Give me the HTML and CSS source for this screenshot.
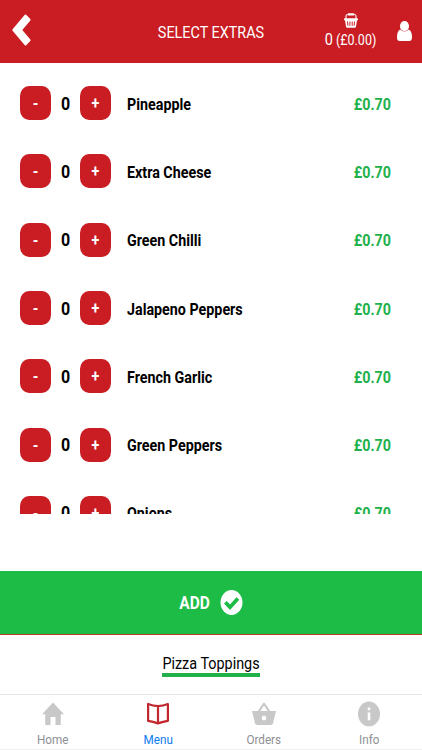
FILE: index.html
```
<!DOCTYPE html>
<html lang="en">
<head>
<meta charset="utf-8">
<title>Select Extras</title>
<link rel="stylesheet" href="styles.css">
</head>
<body>
<header class="header">
  <svg class="back" viewBox="0 0 19 32"><path d="M12.8.8q.7-.8 1.400 0L18.300 5q.6.8 0 1.600L10.300 16l8 9.400q.6.8 0 1.600L14.200 31.200q-.7.8-1.400 0L.6 16.800q-.6-.8 0-1.600z"/></svg>
  <h1 class="title"><span class="tall">SELECT EXTRAS</span></h1>
  <div class="cart">
    <svg class="cart-icon" viewBox="0 0 14 15"><path fill="none" stroke="#fff" stroke-width="1.1" d="M2 6.500V3Q2 1.500 3.800 1.500M12 6.500V3q0-1.500-1.800-1.500"/><rect x="3.600" y=".3" width="6.800" height="2.200" rx=".9"/><rect y="5.200" width="14" height="2.200" rx=".8"/><path d="M1 7h12l-1 6.500q-.2 1.200-1.200 1.200H3.200q-1 0-1.200-1.200z"/><path stroke="#c91d23" stroke-width="1" d="m3.500 8.500.4 4.200M5.900 8.500v4.200m2.300 0V8.500m2.300 0-.4 4.200"/></svg>
    <span class="cart-total tall"><span class="count">0</span> (£0.00)</span>
  </div>
  <svg class="user" viewBox="0 0 15 20"><ellipse cx="7.500" cy="5.200" rx="4.500" ry="5.100"/><path d="M3.200 8.500Q0 10 0 16.500 0 20 2.800 20h9.400q2.800 0 2.800-3.500 0-6.500-3.200-8-4.300 3.800-8.600 0z"/></svg>
</header>
<main class="list">
  <div class="row"><button class="step"><span class="tall">-</span></button><span class="qty tall">0</span><button class="step"><span class="tall">+</span></button><span class="name tall">Pineapple</span><span class="price tall">£0.70</span></div>
  <div class="row"><button class="step"><span class="tall">-</span></button><span class="qty tall">0</span><button class="step"><span class="tall">+</span></button><span class="name tall">Extra Cheese</span><span class="price tall">£0.70</span></div>
  <div class="row"><button class="step"><span class="tall">-</span></button><span class="qty tall">0</span><button class="step"><span class="tall">+</span></button><span class="name tall">Green Chilli</span><span class="price tall">£0.70</span></div>
  <div class="row"><button class="step"><span class="tall">-</span></button><span class="qty tall">0</span><button class="step"><span class="tall">+</span></button><span class="name tall">Jalapeno Peppers</span><span class="price tall">£0.70</span></div>
  <div class="row"><button class="step"><span class="tall">-</span></button><span class="qty tall">0</span><button class="step"><span class="tall">+</span></button><span class="name tall">French Garlic</span><span class="price tall">£0.70</span></div>
  <div class="row"><button class="step"><span class="tall">-</span></button><span class="qty tall">0</span><button class="step"><span class="tall">+</span></button><span class="name tall">Green Peppers</span><span class="price tall">£0.70</span></div>
  <div class="row"><button class="step"><span class="tall">-</span></button><span class="qty tall">0</span><button class="step"><span class="tall">+</span></button><span class="name tall">Onions</span><span class="price tall">£0.70</span></div>
</main>
<button class="add">
  <span class="tall">ADD</span>
  <svg class="check" viewBox="0 0 22 25"><ellipse cx="11" cy="12.500" rx="11" ry="12.500" fill="#fff"/><path fill="none" stroke="#1cbc46" stroke-width="3.800" d="m4.900 12.200 4.600 5 7.900-8.800"/></svg>
</button>
<div class="section"><span class="section-name"><span class="tall">Pizza Toppings</span></span></div>
<nav class="tabs">
  <a class="tab"><svg viewBox="0 0 22 26"><path d="M11 1.500 0 13.200h3.200V24h5.300v-8h5v8h5.300V13.200H22z"/></svg><span class="tall">Home</span></a>
  <a class="tab active"><svg viewBox="0 0 22 26"><path fill="none" stroke="#c1272d" stroke-width="2.200" stroke-linejoin="round" d="M11 5.200Q6 5 1.100 3v16.800q4.900.8 9.900 2.600 5-1.800 9.900-2.600V3q-4.900 2-9.900 2.200zv17"/></svg><span class="tall">Menu</span></a>
  <a class="tab"><svg class="wide" viewBox="0 0 24 26"><path fill-rule="evenodd" d="M0 10h5.800l5-7.400q1.200-1.600 2.400 0l5 7.400H24l-3 12.200q-.5 1.800-2.200 1.800H5.200Q3.500 24 3 22.200zM8.300 10h7.400L12 4.500zM12 14.500a2.200 2.500 0 1 0 0 5 2.200 2.500 0 0 0 0-5z"/></svg><span class="tall">Orders</span></a>
  <a class="tab"><svg viewBox="0 0 22 26"><ellipse cx="11" cy="12.900" rx="11" ry="12.400"/><path fill="#fff" d="M9.700 6.500h2.600v2.700H9.700zm0 5h2.600v7.700H9.700z"/></svg><span class="tall">Info</span></a>
</nav>
</body>
</html>
```
FILE: styles.css
```
* { box-sizing: border-box; }
body {
  margin: 0;
  width: 422px;
  height: 750px;
  overflow: hidden;
  display: flex;
  flex-direction: column;
  background: #fff;
  color: #000;
  font-family: Roboto, "Liberation Sans", sans-serif;
}
button { border: 0; padding: 0; font-family: inherit; color: #fff; }
svg { display: block; flex: none; fill: #fff; }
.tall { display: inline-block; transform: scaleY(1.16); white-space: pre; }
.header {
  height: 62.5px;
  flex: none;
  display: grid;
  grid-template-columns: 31px 1fr 31px;
  background: #c91d23;
  color: #fff;
  position: relative;
}
.back { width: 19px; height: 32px; margin: 14px 0 0 12px; }
.title { margin: 0; font-size: 14.4px; font-weight: 400; line-height: 65px; text-align: center; }
.cart { position: absolute; left: 310px; top: 13px; width: 81px; display: flex; flex-direction: column; align-items: center; }
.cart-icon { width: 14px; height: 15px; }
.cart-total { font-size: 12.5px; line-height: 20px; margin-top: 2px; }
.count { font-size: 14.5px; }
.user { position: absolute; left: 397px; top: 21px; width: 15px; height: 20px; }
.list { height: 451px; flex: none; padding-top: 6.5px; overflow: hidden; }
.row { height: 68.3px; display: flex; align-items: center; padding: 0 31px 0 20px; font-size: 14.3px; font-weight: 700; }
.step { width: 31px; height: 34px; border-radius: 9px / 10px; background: #c91d23; font-size: 14.3px; font-weight: 700; }
.qty { width: 29px; text-align: center; font-size: 16px; transform: scaleY(1.14); }
.name { margin-left: 16px; flex: 1; padding-top: 1px; }
.price { color: #21b14b; padding-top: 1px; }
.add {
  height: 64.5px;
  margin-top: 57px;
  flex: none;
  display: flex;
  align-items: center;
  justify-content: center;
  gap: 10px;
  background: #1cbc46;
  border-bottom: 1.5px solid #c0392b;
  font-size: 15.5px;
  font-weight: 700;
}
.add .tall { padding-top: 1px; }
.check { width: 23px; height: 25px; }
.section { height: 59px; flex: none; display: flex; justify-content: center; align-items: flex-start; padding-top: 19px; font-size: 14.4px; }
.section-name { line-height: 19px; border-bottom: 4px solid #21b14b; }
.tabs { flex: 1; display: grid; grid-template-columns: repeat(4, 1fr); border-top: 1px solid #e4e4e4; border-bottom: 1px solid #f0f0f0; }
.tab { display: flex; flex-direction: column; align-items: center; padding-top: 6px; font-size: 11.7px; line-height: 18px; color: #8e8e93; }
.tab svg { width: 22px; height: 26px; margin-bottom: 3px; fill: #c8c8c8; }
.tab .wide { width: 24px; }
.active { color: #0b7bf0; }
```
